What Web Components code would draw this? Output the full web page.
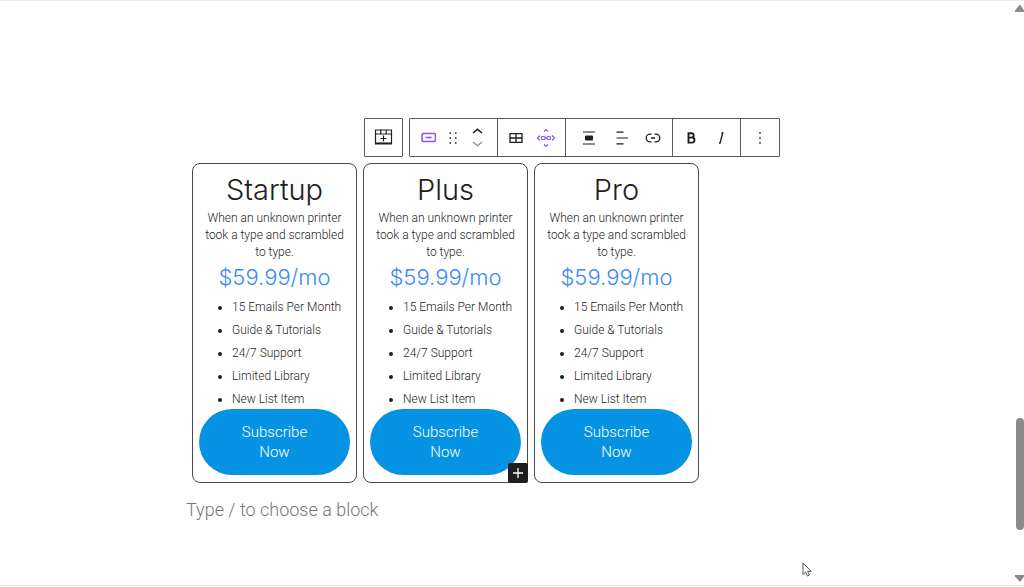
<!DOCTYPE html>
<html lang="en">
<head>
<meta charset="UTF-8">
<meta name="viewport" content="width=device-width, initial-scale=1.0">
<title>Pricing blocks</title>
<style>
  body {
    margin: 0;
    background: #fefefe;
    color: #1e1e1e;
    font-family: Roboto, "Open Sans", sans-serif;
    font-weight: 300;
  }
</style>
</head>
<body>
<block-editor>
  <block-toolbar slot="toolbar"></block-toolbar>
  <pricing-card name="Startup" price="$59.99/mo"></pricing-card>
  <pricing-card name="Plus" price="$59.99/mo"><block-inserter slot="inserter"></block-inserter></pricing-card>
  <pricing-card name="Pro" price="$59.99/mo"></pricing-card>
  <block-prompt slot="prompt"></block-prompt>
</block-editor>

<script>
class BlockEditor extends HTMLElement {
  connectedCallback() {
    this.attachShadow({ mode: 'open' });
    this.shadowRoot.innerHTML = `
      <style>
        :host {
          display: flex;
          box-sizing: border-box;
          min-height: 100vh;
          position: relative;
          border-top: 1px solid #ececee;
        }

        main {
          flex: 1;
          padding: 117px 16px 24px;
        }

        .content {
          max-width: 643px;
          margin: 0 auto;
        }

        .toolbar {
          margin-left: 178px;
        }

        .cards {
          display: grid;
          grid-template-columns: repeat(3, 1fr);
          gap: 6px;
          max-width: 507px;
          margin: 6px 0 0 6px;
        }

        .prompt {
          margin-top: 12px;
        }

        .edge {
          position: absolute;
          left: 0;
          right: 0;
          bottom: 1px;
          height: 1px;
          background: #e6e6ea;
        }

        .pointer {
          position: absolute;
          left: 802px;
          top: 561px;
        }
      </style>

      <main>
        <div class="content">
          <div class="toolbar"><slot name="toolbar"></slot></div>
          <div class="cards"><slot></slot></div>
          <div class="prompt"><slot name="prompt"></slot></div>
        </div>
      </main>
      <scroll-track></scroll-track>
      <div class="edge"></div>
      <svg class="pointer" width="10" height="15" viewBox="0 0 10 15" aria-hidden="true">
        <path d="M1 1v11.5l2.7-2.4 1.7 3.9 2-.9-1.7-3.7h3.5z" fill="#fff" stroke="#55555f" stroke-width="1"/>
      </svg>
    `;
  }
}

class ScrollTrack extends HTMLElement {
  connectedCallback() {
    this.attachShadow({ mode: 'open' });
    this.shadowRoot.innerHTML = `
      <style>
        :host {
          display: flex;
          flex-direction: column;
          align-items: flex-end;
          width: 9px;
          padding: 4px 0;
        }

        svg {
          display: block;
          flex: none;
        }

        .before { flex: 405; }
        .thumb {
          flex: 112;
          width: 8px;
          border-radius: 4px;
          background: #8a8a8a;
        }
        .after { flex: 45; }
      </style>
      <svg width="9" height="8" viewBox="0 0 9 8"><path d="M4.5 0h1L9 5.500V7H0V5.500z" fill="#8a8a8a"/></svg>
      <div class="before"></div>
      <div class="thumb"></div>
      <div class="after"></div>
      <svg width="9" height="8" viewBox="0 0 9 8"><path d="M0 0h9v1.500L5.500 6.500h-1L0 1.500z" fill="#8a8a8a"/></svg>
    `;
  }
}

class BlockToolbar extends HTMLElement {
  connectedCallback() {
    this.attachShadow({ mode: 'open' });
    this.shadowRoot.innerHTML = `
      <style>
        :host {
          display: flex;
          gap: 6px;
        }

        .bar {
          display: flex;
          box-sizing: border-box;
          height: 39px;
          border: 1px solid #5a5a5a;
          border-radius: 1px;
          background: #fff;
        }

        .group {
          display: flex;
          align-items: center;
          padding: 0 4px 0 3px;
          border-right: 1px solid #5a5a5a;
        }

        .group:last-child {
          padding: 0 4px;
          border-right: 0;
        }

        .align {
          gap: 2px;
          padding-left: 8px;
        }

        button {
          display: grid;
          place-items: center;
          width: 30px;
          height: 37px;
          padding: 0;
          border: 0;
          background: none;
          color: #1e1e1e;
        }

        .parent button {
          width: 37px;
        }

        .handle {
          width: 20px;
        }

        .mover button {
          height: 13px;
        }

        .mover button:disabled {
          color: #8c8c8c;
        }

        .accent {
          color: #8a55f2;
        }

        svg {
          display: block;
          fill: none;
          stroke: currentColor;
        }
      </style>

      <div class="bar parent">
        <button aria-label="Select parent block">
          <svg width="20" height="20" viewBox="0 0 20 20" stroke-width="1.200">
            <path d="M1.500 2h16v13h-16zM1.500 6h16M6.800 2v4M12.200 2v4M9.500 7.500v6M6.500 10.500h6"/><path d="M1 15.700h17" stroke-width="1.600"/>
          </svg>
        </button>
      </div>
      <div class="bar" role="toolbar" aria-label="Block tools">
        <div class="group">
          <button class="accent" aria-label="Button">
            <svg width="16" height="12" viewBox="0 0 16 12" stroke-width="1.600"><rect x="2" y="1.500" width="13.400" height="8" rx="1.500"/><path d="M5.700 5.500h6"/></svg>
          </button>
          <button class="handle" aria-label="Drag">
            <svg width="8" height="14" viewBox="0 0 8 14"><path d="M.5 2H2M6 2h1.500M.5 7H2M6 7h1.500M.5 12H2M6 12h1.500" stroke-width="1.600"/></svg>
          </button>
          <div class="mover">
            <button aria-label="Move up"><svg width="12" height="8" viewBox="0 0 12 8"><path d="M1 6l4.500-3.700L10 6" stroke-width="1.500"/></svg></button>
            <button aria-label="Move down" disabled><svg width="12" height="8" viewBox="0 0 12 8"><path d="M1 2l4.500 3.700L10 2" stroke-width="1.300"/></svg></button>
          </div>
        </div>
        <div class="group">
          <button aria-label="Table">
            <svg width="14" height="12" viewBox="0 0 14 12" stroke-width="1.300"><path d="M1 1.700h12v8.600H1zM1 6h12M7 1.700v8.600"/></svg>
          </button>
          <button class="accent" aria-label="Select container">
            <svg width="20" height="20" viewBox="0 0 20 20" stroke-width="1.200"><path d="M8 3.500l2-2 2 2M8 16.500l2 2 2-2M4 7.500L1.500 10 4 12.500M16 7.500l2.500 2.500L16 12.500"/><rect x="5.500" y="8.500" width="3.500" height="3" rx="1"/><rect x="11" y="8.500" width="3.500" height="3" rx="1"/><path d="M9 10h2"/></svg>
          </button>
        </div>
        <div class="group align">
          <button aria-label="Align">
            <svg width="12" height="14" viewBox="0 0 12 14"><path d="M0 1h12M0 13h12" stroke-width="1.200"/><path d="M2.500 5h7v4h-7z" fill="currentColor"/></svg>
          </button>
          <button aria-label="Align text">
            <svg width="14" height="14" viewBox="0 0 14 14" stroke-width="1.200"><path d="M2.500 1.200h7M2.500 7H14M2.500 12.800h7"/></svg>
          </button>
          <button aria-label="Link">
            <svg width="16" height="12" viewBox="0 0 16 12" stroke-width="1.300"><path d="M6.500 2.200H5a3.800 3.800 0 0 0 0 7.600h1.500M9.500 2.200H11a3.800 3.800 0 0 1 0 7.600H9.500M6 6h4"/></svg>
          </button>
        </div>
        <div class="group">
          <button aria-label="Bold">
            <svg width="10" height="12" viewBox="0 0 10 12"><path d="M2.500 1.200h3a2.200 2.200 0 0 1 0 4.400h-3H6a2.500 2.500 0 0 1 0 5H2.500z" stroke-width="1.900"/></svg>
          </button>
          <button aria-label="Italic">
            <svg width="8" height="12" viewBox="0 0 8 12"><path d="M5.700.700L3 11.300M4.500 1h2M2 11h1.700" stroke-width="1.400"/></svg>
          </button>
        </div>
        <div class="group">
          <button aria-label="Options">
            <svg width="2" height="14" viewBox="0 0 2 14"><path d="M.2 2h1.600M.2 7h1.600M.2 12h1.600" stroke-width="1.600"/></svg>
          </button>
        </div>
      </div>
    `;
  }
}

class PricingCard extends HTMLElement {
  connectedCallback() {
    this.attachShadow({ mode: 'open' });
    this.shadowRoot.innerHTML = `
      <style>
        :host {
          display: block;
          position: relative;
          padding: 6px 6px 7px;
          border: 1px solid #4a4a4a;
          border-radius: 8px;
          background: #fff;
          text-align: center;
        }

        h2, p, ul {
          margin: 0;
          font-weight: 300;
        }

        h2 {
          font-family: Inter, sans-serif;
          font-size: 29px;
          line-height: 40px;
        }

        p {
          font-size: 12px;
          line-height: 17px;
        }

        .price {
          color: #3b8cf5;
          font-family: Inter, sans-serif;
          font-size: 22px;
          line-height: 32px;
        }

        ul {
          margin: 3px 0 -2px;
          padding-left: 33px;
          font-size: 12px;
          line-height: 23px;
          text-align: left;
          white-space: nowrap;
        }

        button {
          display: block;
          position: relative;
          width: 100%;
          padding: 13px 32px;
          border: 0;
          border-radius: 33px;
          background: #0693e3;
          color: #fff;
          font: inherit;
          font-size: 15px;
          line-height: 20px;
        }
      </style>

      <h2>${this.getAttribute('name')}</h2>
      <p>When an unknown printer took a type and scrambled to type.</p>
      <p class="price">${this.getAttribute('price')}</p>
      <ul>
        <li>15 Emails Per Month</li>
        <li>Guide &amp; Tutorials</li>
        <li>24/7 Support</li>
        <li>Limited Library</li>
        <li>New List Item</li>
      </ul>
      <button>Subscribe Now</button>
      <slot name="inserter"></slot>
    `;
  }
}

class BlockInserter extends HTMLElement {
  connectedCallback() {
    this.attachShadow({ mode: 'open' });
    this.shadowRoot.innerHTML = `
      <style>
        :host {
          position: absolute;
          right: -1px;
          bottom: -1px;
        }

        button {
          display: grid;
          place-items: center;
          width: 20px;
          height: 20px;
          padding: 0;
          border: 0;
          border-radius: 2px;
          background: #1e1e1e;
        }
      </style>
      <button aria-label="Add block">
        <svg width="10" height="10" viewBox="0 0 10 10"><path d="M5 0v10M0 5h10" stroke="#fff" stroke-width="1.300"/></svg>
      </button>
    `;
  }
}

class BlockPrompt extends HTMLElement {
  connectedCallback() {
    this.attachShadow({ mode: 'open' });
    this.shadowRoot.innerHTML = `
      <style>
        :host {
          display: block;
        }

        input {
          display: block;
          width: 100%;
          height: 28px;
          padding: 0;
          border: 0;
          outline: 0;
          background: none;
          font: inherit;
          font-size: 18px;
        }

        input::placeholder {
          color: #777;
          opacity: 1;
        }
      </style>
      <input type="text" aria-label="Add a block" placeholder="Type / to choose a block">
    `;
  }
}

customElements.define('block-editor', BlockEditor);
customElements.define('scroll-track', ScrollTrack);
customElements.define('block-toolbar', BlockToolbar);
customElements.define('pricing-card', PricingCard);
customElements.define('block-inserter', BlockInserter);
customElements.define('block-prompt', BlockPrompt);
</script>
</body>
</html>
